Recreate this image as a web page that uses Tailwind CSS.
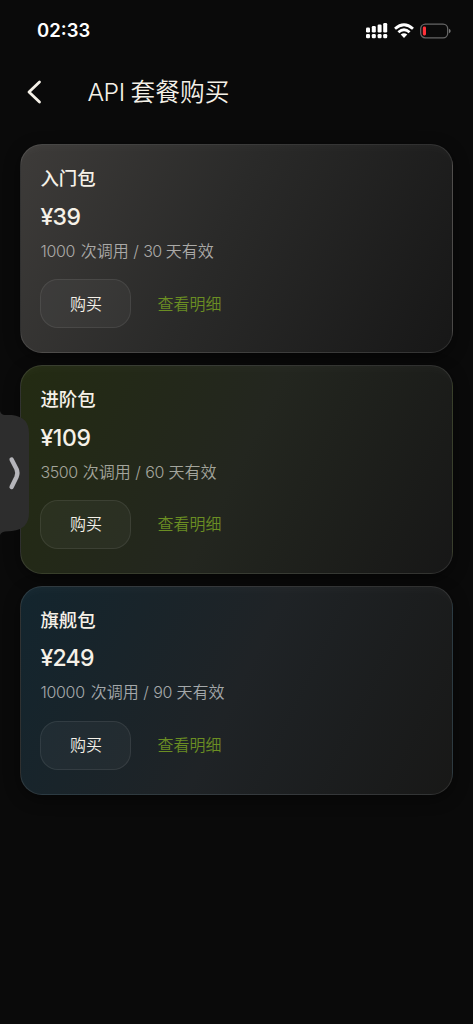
<!DOCTYPE html>
<html lang="zh-CN">
<head>
<meta charset="utf-8">
<title>API 套餐购买</title>
<script src="https://cdn.jsdelivr.net/npm/@tailwindcss/browser@4"></script>
</head>
<body class="bg-[#0a0a0a]">
<div class="relative flex h-[1024px] w-[473px] flex-col overflow-hidden bg-[#0a0a0a] font-['Inter','Noto_Sans_CJK_SC',sans-serif] text-[#f5f1e8]">
  <div class="flex h-[61px] shrink-0 items-center justify-between pr-[22px] pl-[37px]">
    <span class="text-[18.5px] font-semibold text-white">02:33</span>
    <div class="flex items-center gap-[6px]">
      <svg width="22" height="16" viewBox="0 0 22 16" fill="#fff"><rect x="0" y="4.5" width="4" height="5" rx="1.3"/><rect x="5.8" y="3" width="4" height="6.5" rx="1.3"/><rect x="11.6" y="1.5" width="4" height="8" rx="1.3"/><rect x="17.2" y="0" width="4" height="9.5" rx="1.3"/><rect x="0" y="11" width="4" height="4.2" rx="1.3"/><rect x="5.8" y="11" width="4" height="4.2" rx="1.3"/><rect x="11.6" y="11" width="4" height="4.2" rx="1.3"/><rect x="17.2" y="11" width="4" height="4.2" rx="1.3"/></svg>
      <svg width="20" height="16" viewBox="0 0 20 16" fill="none" stroke="#fff" stroke-width="2.8"><path d="M1 5.8Q10-2.2 19 5.8"/><path d="M4.4 9.3Q10 4.2 15.6 9.3"/><path fill="#fff" stroke="none" d="M6.7 11.6Q10 8.8 13.3 11.6L10 15Z"/></svg>
      <svg width="31" height="16" viewBox="0 0 31 16"><rect x=".7" y="1.2" width="27" height="13.6" rx="4.6" fill="none" stroke="#666" stroke-width="1.3"/><rect x="2.8" y="3.6" width="3.2" height="8.8" rx="1.3" fill="#ff3038"/><path d="M29 5.8Q30.7 6.6 30.7 8T29 10.2Z" fill="#777"/></svg>
    </div>
  </div>
  <div class="flex h-[61px] shrink-0 items-center pl-[27px]">
    <svg width="15" height="24" viewBox="0 0 15 24" fill="none" stroke="#f5f1e8" stroke-width="2.8" stroke-linecap="round" stroke-linejoin="round"><path d="M12.500 2L2 12L12.500 22"/></svg>
    <h1 class="ml-[45.5px] flex gap-[6px] text-[24.7px] leading-[36px] font-[350] whitespace-nowrap"><span class="font-light tracking-[-0.5px]">API</span><span>套餐购买</span></h1>
  </div>
  <main class="mt-[22.4px] flex flex-col gap-[11.7px] px-[20px]">
    <section class="h-[209px] rounded-[22px] border border-white/10 bg-linear-[116deg,#3d3b39,#2a2a29_45%,#171717] px-[19.4px] pt-[19px] shadow-[0_4px_16px_rgba(0,0,0,0.45),inset_0_10px_14px_-10px_rgba(255,255,255,0.04)]">
      <h2 class="text-[18.4px] leading-[28px] font-medium">入门包</h2>
      <p class="mt-[8.6px] text-[23px] leading-[32px] font-medium tracking-[-0.6px]">¥39</p>
      <p class="mt-[5px] flex h-[26px] items-center gap-[4.4px] text-[16px] font-[350] text-[#aaa9a7]"><span class="w-[36px] font-light tracking-[-0.3px]">1000</span><span>次调用</span><span>/</span><span class="font-light tracking-[-0.7px]">30</span><span>天有效</span></p>
      <div class="mt-[15.2px] flex h-[49px] items-center">
        <button class="h-[49px] w-[91px] rounded-[18px] border border-white/8 bg-white/4 text-[16px] font-[350]">购买</button>
        <a class="ml-[26px] text-[16px] font-[350] text-[#6b8e23]">查看明细</a>
      </div>
    </section>
    <section class="h-[209px] rounded-[22px] border border-white/10 bg-linear-[116deg,#232b12,#23261f_50%,#171717] px-[19.4px] pt-[19px] shadow-[0_4px_16px_rgba(0,0,0,0.45),inset_0_10px_14px_-10px_rgba(255,255,255,0.04)]">
      <h2 class="text-[18.4px] leading-[28px] font-medium">进阶包</h2>
      <p class="mt-[8.6px] text-[23px] leading-[32px] font-medium tracking-[-0.4px]">¥109</p>
      <p class="mt-[5px] flex h-[26px] items-center gap-[4.4px] text-[16px] font-[350] text-[#a3a59c]"><span class="w-[38px] font-light tracking-[-0.4px]">3500</span><span>次调用</span><span>/</span><span class="font-light tracking-[-0.3px]">60</span><span>天有效</span></p>
      <div class="mt-[15.2px] flex h-[49px] items-center">
        <button class="h-[49px] w-[91px] rounded-[18px] border border-white/8 bg-white/4 text-[16px] font-[350]">购买</button>
        <a class="ml-[26px] text-[16px] font-[350] text-[#6b8e23]">查看明细</a>
      </div>
    </section>
    <section class="h-[209px] rounded-[22px] border border-white/10 bg-linear-[116deg,#13252e,#1f2326_50%,#181817] px-[19.4px] pt-[19px] shadow-[0_4px_16px_rgba(0,0,0,0.45),inset_0_10px_14px_-10px_rgba(255,255,255,0.04)]">
      <h2 class="text-[18.4px] leading-[28px] font-medium">旗舰包</h2>
      <p class="mt-[8.6px] text-[23px] leading-[32px] font-medium tracking-[-0.7px]">¥249</p>
      <p class="mt-[5px] flex h-[26px] items-center gap-[4.4px] text-[16px] font-[350] text-[#a4a8aa]"><span class="w-[46px] font-light tracking-[-0.300px]">10000</span><span>次调用</span><span>/</span><span class="font-light tracking-[-0.3px]">90</span><span>天有效</span></p>
      <div class="mt-[15.2px] flex h-[49px] items-center">
        <button class="h-[49px] w-[91px] rounded-[18px] border border-white/8 bg-white/4 text-[16px] font-[350]">购买</button>
        <a class="ml-[26px] text-[16px] font-[350] text-[#6b8e23]">查看明细</a>
      </div>
    </section>
  </main>
  <svg class="absolute top-[411px] left-0" width="30" height="124" viewBox="0 0 30 124"><path fill="#2d2d2d" d="M0 0Q1 4 5 4H12Q29 6 29 22V102Q29 118 12 120L5 120.500Q1 121 0 124Z"/><path d="M11.600 48.500L16.500 58Q18.300 62 16.500 66L11.600 76" fill="none" stroke="#b5b5ba" stroke-width="4.400" stroke-linecap="round" stroke-linejoin="round"/></svg>
</div>
</body>
</html>
